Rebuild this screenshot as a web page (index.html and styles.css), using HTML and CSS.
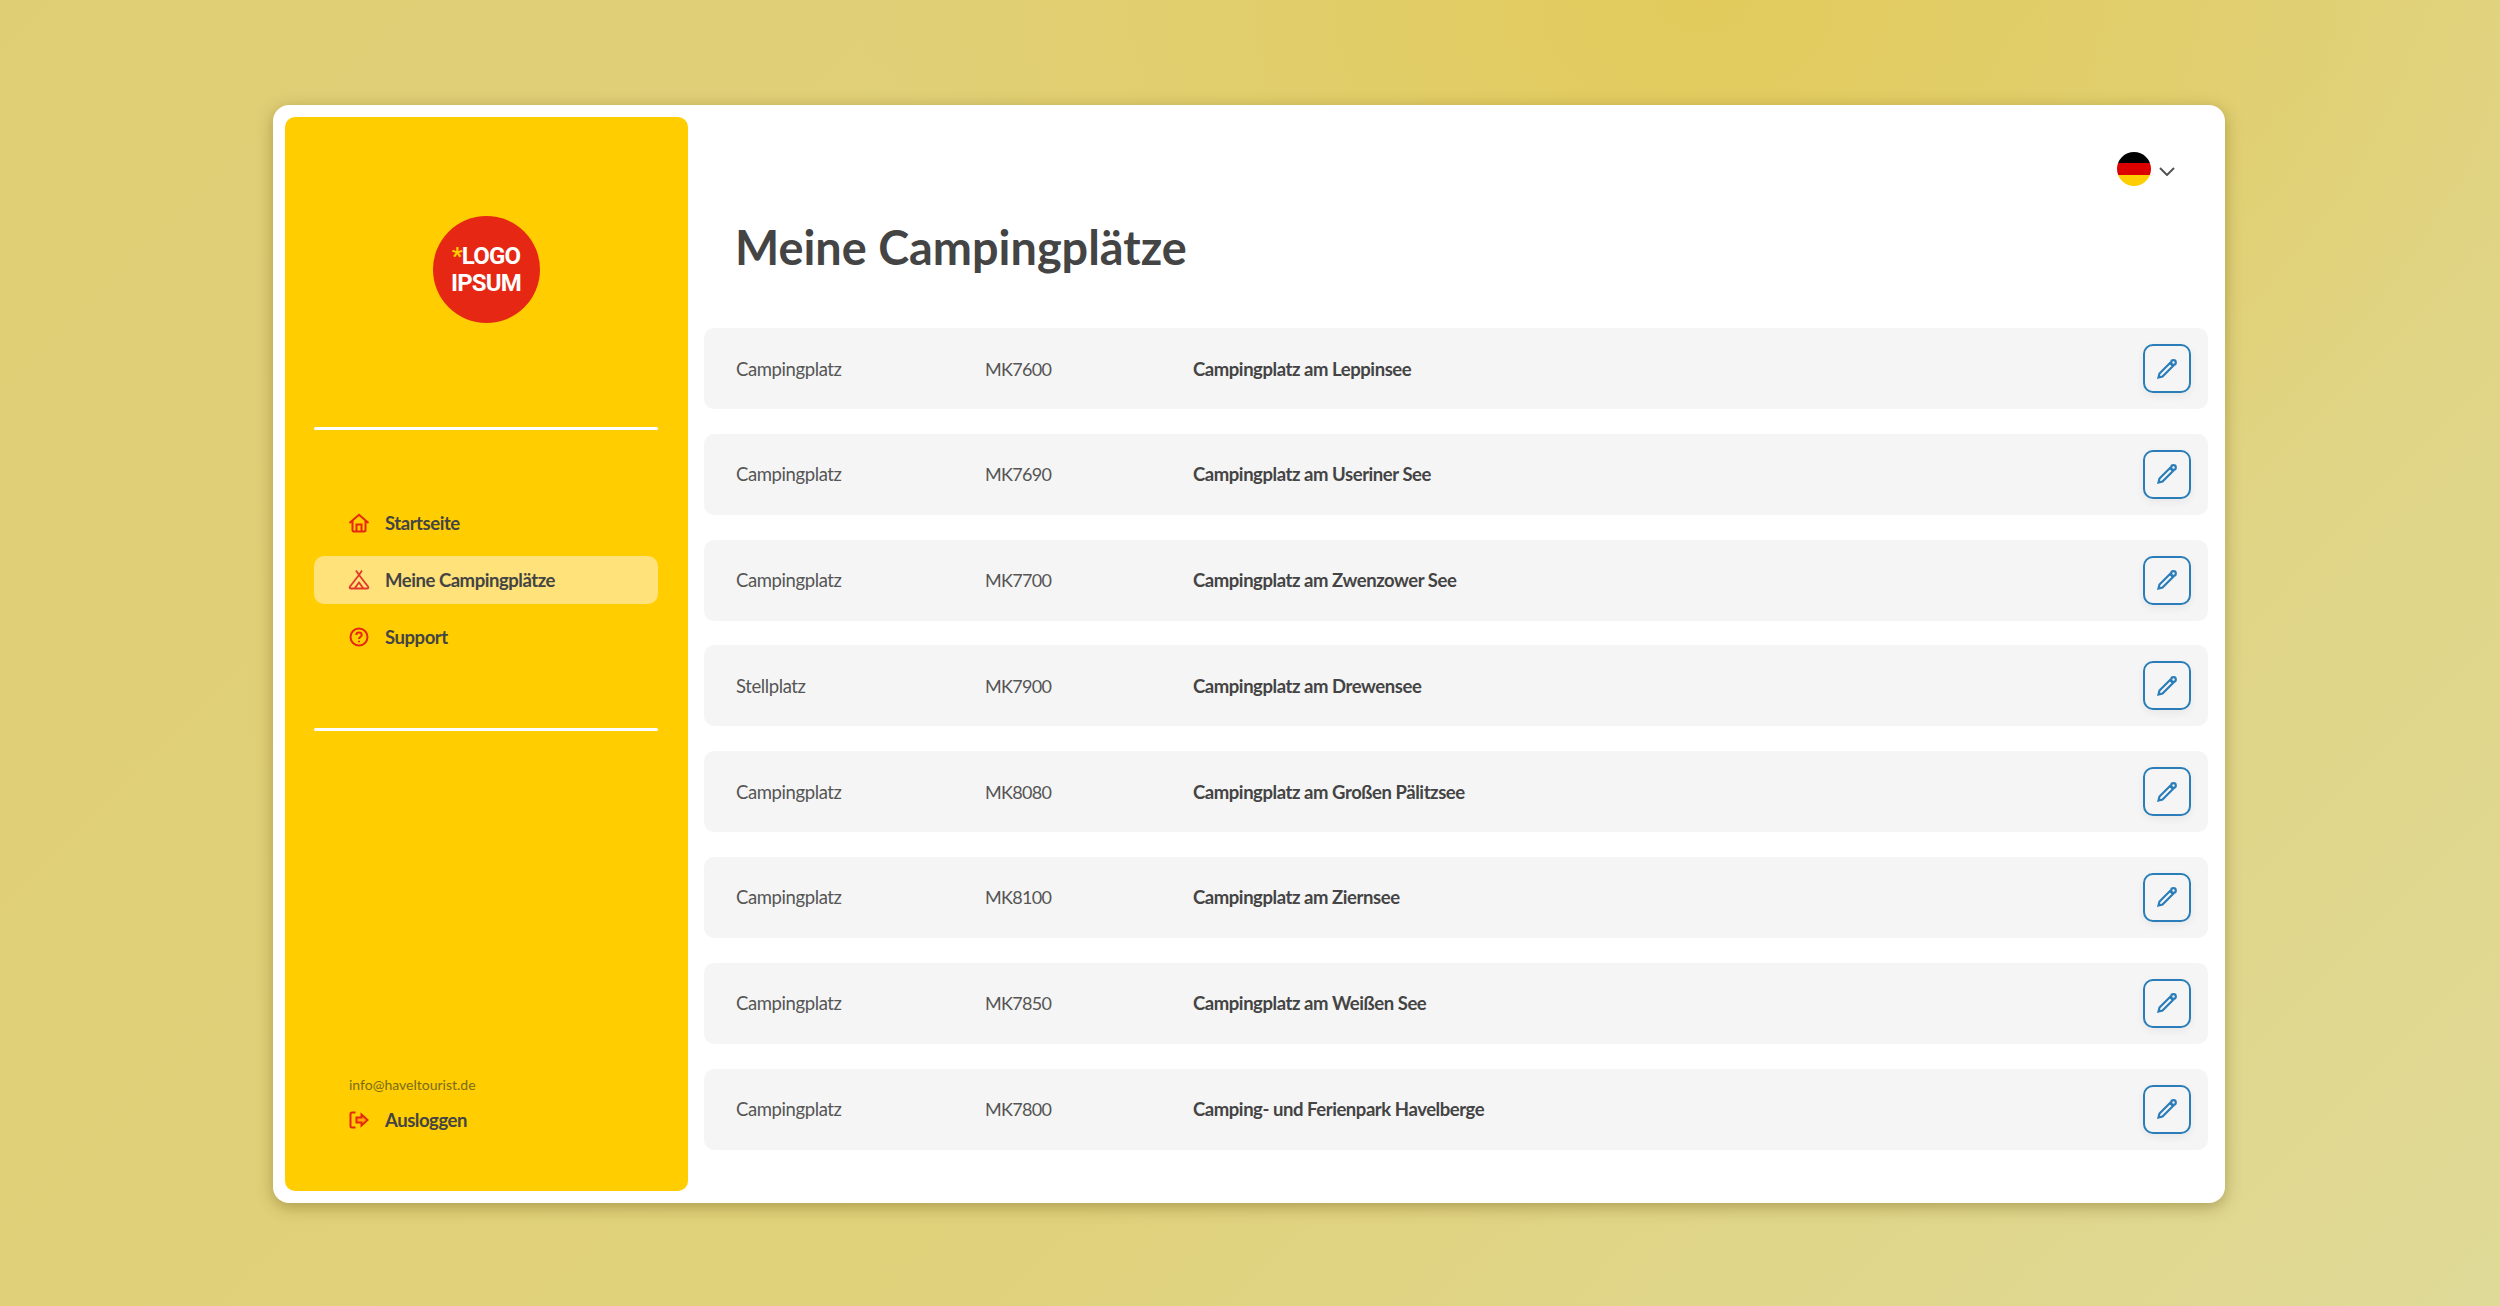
FILE: index.html
```html
<!DOCTYPE html>
<html lang="de">
<head>
    <meta charset="UTF-8">
    <meta name="viewport" content="width=device-width, initial-scale=1.0">
    <title>Meine Campingplätze</title>
    <link rel="stylesheet" href="styles.css">
</head>
<body>
    <div class="window">
        <aside class="sidebar">
            <div class="logo">
                <div><span class="logo-star">*</span>LOGO</div>
                <div>IPSUM</div>
            </div>
            <hr class="divider">
            <nav class="nav">
                <a class="nav-item">
                    <svg class="nav-icon" viewBox="0 0 22 22"><path d="M1.500 11 11 2.800 20.500 11M4.500 9V18C4.500 19 5 19.500 6 19.500H16C17 19.500 17.500 19 17.500 18V9M8.500 19.500V12.500H13.500V19.500"/></svg>
                    <span>Startseite</span>
                </a>
                <a class="nav-item active">
                    <svg class="nav-icon tent" viewBox="0 0 22 22"><path d="M8 1.500 11 6 14 1.500M11 6 2 17.500C1.300 18.500 1.600 19.500 3 19.500H19C20.400 19.500 20.700 18.500 20 17.500L11 6M6.500 19.500 11 13.500 15.500 19.500"/></svg>
                    <span>Meine Campingplätze</span>
                </a>
                <a class="nav-item">
                    <svg class="nav-icon" viewBox="0 0 22 22"><circle cx="11" cy="11" r="8.500"/><path d="M8.300 9C8.300 5.800 13.700 5.800 13.700 9C13.700 11 11 11 11 13M11 14.800V16.300"/></svg>
                    <span>Support</span>
                </a>
            </nav>
            <hr class="divider divider-lower">
            <div class="account">
                <div class="account-mail">info@haveltourist.de</div>
                <a class="nav-item logout">
                    <svg class="nav-icon" viewBox="0 0 22 22"><path d="M7.500 3.500H4C3 3.500 2.500 4 2.500 5V17C2.500 18 3 18.500 4 18.500H7.500"/><path class="arrow" d="M8.500 8.500H13.500V5.500L19.500 11 13.500 16.500V13.500H8.500Z"/></svg>
                    <span>Ausloggen</span>
                </a>
            </div>
        </aside>

        <main class="content">
            <div class="lang">
                <div class="flag"><i class="flag-black"></i><i class="flag-red"></i><i class="flag-gold"></i></div>
                <svg class="chevron" viewBox="0 0 16 9"><path d="M1 1 8 8 15 1"/></svg>
            </div>
            <h1 class="page-title">Meine Campingplätze</h1>
            <div class="site-list">
                <div class="site-row">
                    <span class="site-type">Campingplatz</span>
                    <span class="site-code">MK7600</span>
                    <span class="site-name">Campingplatz am Leppinsee</span>
                    <button class="edit-btn"><svg viewBox="0 0 24 24"><path d="M3.500 20.500 4.500 16.500 15 6 18 9 7.500 19.500Z"/><circle cx="18.500" cy="5.500" r="2.300"/></svg></button>
                </div>
                <div class="site-row">
                    <span class="site-type">Campingplatz</span>
                    <span class="site-code">MK7690</span>
                    <span class="site-name">Campingplatz am Useriner See</span>
                    <button class="edit-btn"><svg viewBox="0 0 24 24"><path d="M3.500 20.500 4.500 16.500 15 6 18 9 7.500 19.500Z"/><circle cx="18.500" cy="5.500" r="2.300"/></svg></button>
                </div>
                <div class="site-row">
                    <span class="site-type">Campingplatz</span>
                    <span class="site-code">MK7700</span>
                    <span class="site-name">Campingplatz am Zwenzower See</span>
                    <button class="edit-btn"><svg viewBox="0 0 24 24"><path d="M3.500 20.500 4.500 16.500 15 6 18 9 7.500 19.500Z"/><circle cx="18.500" cy="5.500" r="2.300"/></svg></button>
                </div>
                <div class="site-row">
                    <span class="site-type">Stellplatz</span>
                    <span class="site-code">MK7900</span>
                    <span class="site-name">Campingplatz am Drewensee</span>
                    <button class="edit-btn"><svg viewBox="0 0 24 24"><path d="M3.500 20.500 4.500 16.500 15 6 18 9 7.500 19.500Z"/><circle cx="18.500" cy="5.500" r="2.300"/></svg></button>
                </div>
                <div class="site-row">
                    <span class="site-type">Campingplatz</span>
                    <span class="site-code">MK8080</span>
                    <span class="site-name">Campingplatz am Großen Pälitzsee</span>
                    <button class="edit-btn"><svg viewBox="0 0 24 24"><path d="M3.500 20.500 4.500 16.500 15 6 18 9 7.500 19.500Z"/><circle cx="18.500" cy="5.500" r="2.300"/></svg></button>
                </div>
                <div class="site-row">
                    <span class="site-type">Campingplatz</span>
                    <span class="site-code">MK8100</span>
                    <span class="site-name">Campingplatz am Ziernsee</span>
                    <button class="edit-btn"><svg viewBox="0 0 24 24"><path d="M3.500 20.500 4.500 16.500 15 6 18 9 7.500 19.500Z"/><circle cx="18.500" cy="5.500" r="2.300"/></svg></button>
                </div>
                <div class="site-row">
                    <span class="site-type">Campingplatz</span>
                    <span class="site-code">MK7850</span>
                    <span class="site-name">Campingplatz am Weißen See</span>
                    <button class="edit-btn"><svg viewBox="0 0 24 24"><path d="M3.500 20.500 4.500 16.500 15 6 18 9 7.500 19.500Z"/><circle cx="18.500" cy="5.500" r="2.300"/></svg></button>
                </div>
                <div class="site-row">
                    <span class="site-type">Campingplatz</span>
                    <span class="site-code">MK7800</span>
                    <span class="site-name">Camping- und Ferienpark Havelberge</span>
                    <button class="edit-btn"><svg viewBox="0 0 24 24"><path d="M3.500 20.500 4.500 16.500 15 6 18 9 7.500 19.500Z"/><circle cx="18.500" cy="5.500" r="2.300"/></svg></button>
                </div>
            </div>
        </main>
    </div>
</body>
</html>
```

FILE: styles.css
```css
* {
    box-sizing: border-box;
}
body {
    margin: 0;
    height: 100vh;
    overflow: hidden;
    padding: 105px 0 0 273px;
    font-family: "Lato", "Noto Sans", sans-serif;
    color: #444;
    background:
        radial-gradient(ellipse at 68% 0%, #e2cb5c 0%, rgba(226, 203, 92, 0) 35%),
        linear-gradient(135deg, #e0ce74 0%, #e0d27c 60%, #e0da98 100%);
}
.window {
    display: flex;
    width: 1952px;
    height: 1098px;
    padding: 12px 17px 12px 12px;
    background: #fff;
    border-radius: 16px;
    box-shadow: 0 4px 16px rgba(110, 90, 20, 0.45);
}
.sidebar {
    display: flex;
    flex-direction: column;
    flex: 0 0 403px;
    padding: 99px 30px 0 29px;
    background: #ffcd00;
    border-radius: 10px;
}
.logo {
    width: 107px;
    height: 107px;
    margin: 0 auto;
    padding-top: 27px;
    border-radius: 50%;
    background: #e52713;
    color: #fff;
    font-family: "Roboto", sans-serif;
    font-size: 24px;
    font-weight: 700;
    letter-spacing: -0.8px;
    line-height: 27px;
    text-align: center;
}
.logo-star {
    color: #ffcd00;
}
.divider {
    width: 100%;
    height: 3px;
    margin: 104px 0 0;
    border: 0;
    border-radius: 2px;
    background: #fff;
}
.divider-lower {
    margin-top: 67px;
}
.nav {
    display: flex;
    flex-direction: column;
    gap: 9px;
    margin-top: 69px;
}
.nav-item {
    display: flex;
    align-items: center;
    gap: 15px;
    height: 48px;
    padding-left: 34px;
    border-radius: 10px;
    font-size: 18.500px;
    font-weight: 700;
    letter-spacing: -0.45px;
}
.nav-item.active {
    background: #ffe27a;
}
.nav-icon {
    flex: 0 0 22px;
    width: 22px;
    height: 22px;
    fill: none;
    stroke: #e52713;
    stroke-width: 2;
}
.nav-icon.tent {
    stroke: #e2382c;
    stroke-width: 1.800;
}
.account {
    margin-top: auto;
    padding-bottom: 51px;
}
.account-mail {
    padding-left: 35px;
    margin-bottom: 7px;
    font-size: 14px;
    color: #7a6c1c;
}
.logout {
    height: 40px;
}
.logout .arrow {
    fill: #ffa800;
}
.content {
    flex: 1;
    min-width: 0;
    padding-left: 16px;
}
.lang {
    display: flex;
    align-items: center;
    justify-content: flex-end;
    gap: 8px;
    height: 34px;
    margin-top: 35px;
    padding-right: 33px;
}
.flag {
    display: flex;
    flex-direction: column;
    width: 34px;
    height: 34px;
    border-radius: 50%;
    overflow: hidden;
}
.flag i {
    flex: 1;
}
.flag-black {
    background: #000;
}
.flag-red {
    background: #dd0000;
}
.flag-gold {
    background: #ffce00;
}
.chevron {
    width: 16px;
    height: 9px;
    margin-top: 4px;
    fill: none;
    stroke: #555;
    stroke-width: 2;
}
.page-title {
    margin: 31px 0 51px;
    padding-left: 31px;
    font-size: 46.800px;
    font-weight: 700;
    line-height: 60px;
    color: #444;
}
.site-list {
    display: flex;
    flex-direction: column;
    gap: 24.800px;
}
.site-row {
    display: flex;
    align-items: center;
    height: 81px;
    padding: 0 17px 0 32px;
    background: #f5f5f5;
    border-radius: 10px;
    font-size: 18.500px;
}
.site-type {
    flex: 0 0 249px;
    color: #555;
    letter-spacing: -0.4px;
}
.site-code {
    flex: 0 0 208px;
    color: #555;
    font-size: 18px;
    letter-spacing: -0.7px;
}
.site-name {
    flex: 1;
    font-weight: 700;
    letter-spacing: -0.44px;
}
.edit-btn {
    display: flex;
    align-items: center;
    justify-content: center;
    width: 48px;
    height: 49px;
    padding: 0;
    background: #f5f5f5;
    border: 2.500px solid #2a7db8;
    border-radius: 10px;
    box-shadow: 0 3px 8px rgba(0, 0, 0, 0.06);
}
.edit-btn svg {
    width: 24px;
    height: 24px;
    fill: none;
    stroke: #2a7db8;
    stroke-width: 2.200;
}
```
